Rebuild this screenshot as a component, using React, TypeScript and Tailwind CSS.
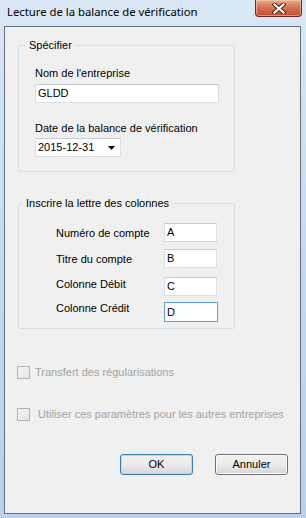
import React from "react";

const font = { fontFamily: '"Liberation Sans", Arial, sans-serif' };

function TextBox({ value, w, h = 19, focused = false }: { value: string; w: string; h?: number; focused?: boolean }) {
  return (
    <div
      className={`${w} ${h === 20 ? "h-[20px]" : "h-[19px]"} bg-white border flex items-center pl-[2px] text-[11px] leading-[13px] text-black ${
        focused ? "border-[#5b9fdf]" : "border-[#d9dee4] border-t-[#c6ccd4]"
      }`}
    >
      {value}
    </div>
  );
}

function CheckBox({ label, gap }: { label: string; gap: string }) {
  return (
    <div className="flex items-center ml-[12px]">
      <div className="w-[13px] h-[13px] border border-[#b4b4b4] bg-gradient-to-br from-[#f4f4f4] to-[#e6e6e6]" />
      <span className={`${gap} text-[11px] leading-[13px] text-[#a3a3a3]`}>{label}</span>
    </div>
  );
}

function Btn({ label, def = false }: { label: string; def?: boolean }) {
  return (
    <div
      className={`w-[73px] h-[21px] rounded-[3px] border flex items-center justify-center text-[11px] leading-[13px] text-black bg-gradient-to-b from-[#f2f2f2] via-[#ebebeb] to-[#d6d6d6] ${
        def ? "border-[#3c7fb1] shadow-[inset_0_0_0_1px_#a8dff8]" : "border-[#707070] shadow-[inset_0_0_0_1px_#fcfcfc]"
      }`}
    >
      {label}
    </div>
  );
}

export default function App() {
  return (
    <div className="w-[306px] h-[518px] flex flex-col bg-gradient-to-b from-[#dae7f6] via-[#c4d9f1] to-[#b9d1ee] overflow-hidden" style={font}>
      {/* Title bar */}
      <div className="h-[26px] flex items-start">
        <div
          className="mt-[4px] ml-[7px] text-[11.3px] leading-[16px] text-black"
          style={{ fontFamily: '"Noto Sans", "Open Sans", sans-serif' }}
        >
          Lecture de la balance de vérification
        </div>
        <div className="ml-auto mr-[4px] w-[47px] h-[17px] rounded-b-[4px] border border-t-0 border-[#6d2a1f] bg-gradient-to-b from-[#e8a98c] via-[#d27151] to-[#c24a2c] flex items-center justify-center shadow-[inset_0_0_0_1px_rgba(255,220,200,0.5)]">
          <svg width="14" height="11" viewBox="0 0 14 11">
            <path d="M2.5 1.5 L11.5 9.5 M11.5 1.5 L2.5 9.5" stroke="#4a2418" strokeWidth="4.2" strokeLinecap="square" />
            <path d="M2.5 1.5 L11.5 9.5 M11.5 1.5 L2.5 9.5" stroke="#ffffff" strokeWidth="2.2" strokeLinecap="square" />
          </svg>
        </div>
      </div>

      {/* Client area */}
      <div className="ml-[4px] mr-[5px] h-[488px] border border-[#66717e] bg-[#f0f0f0] flex flex-col text-[11px] leading-[13px] text-black">
        {/* Group 1 */}
        <fieldset className="ml-[13px] mt-[12px] w-[217px] border border-[#d5dfe5] rounded-[3px] pb-[14px]">
          <legend className="ml-[7px] px-[3px] leading-[13px]">Spécifier</legend>
          <div className="pl-[16px]">
            <div className="mt-[15px]">Nom de l'entreprise</div>
            <div className="mt-[4px]">
              <TextBox value="GLDD" w="w-[184px]" />
            </div>
            <div className="mt-[19px]">Date de la balance de vérification</div>
            <div className="mt-[3px] w-[86px] h-[19px] bg-white border border-[#d9dee4] border-t-[#c6ccd4] flex items-center pl-[2px]">
              <span>2015-12-31</span>
              <svg className="ml-auto mr-[5px]" width="7" height="4" viewBox="0 0 7 4">
                <path d="M0 0 H7 L3.5 4 Z" fill="#000" />
              </svg>
            </div>
          </div>
        </fieldset>

        {/* Group 2 */}
        <fieldset className="ml-[13px] mt-[25px] w-[217px] border border-[#d5dfe5] rounded-[3px] pb-[6px]">
          <legend className="ml-[4px] px-[3px] leading-[13px]">Inscrire la lettre des colonnes</legend>
          <div className="pl-[37px]">
            <div className="mt-[13px] flex items-start">
              <div className="w-[108px] mt-[4px]">Numéro de compte</div>
              <TextBox value="A" w="w-[53px]" />
            </div>
            <div className="mt-[7px] flex items-start">
              <div className="w-[108px] mt-[4px]">Titre du compte</div>
              <TextBox value="B" w="w-[53px]" />
            </div>
            <div className="mt-[9px] flex items-start">
              <div className="w-[108px] mt-[1px]">Colonne Débit</div>
              <TextBox value="C" w="w-[53px]" />
            </div>
            <div className="mt-[6px] flex items-start">
              <div className="w-[108px]">Colonne Crédit</div>
              <TextBox value="D" w="w-[54px]" h={20} focused />
            </div>
          </div>
        </fieldset>

        <div className="mt-[37px]">
          <CheckBox label="Transfert des régularisations" gap="ml-[5px]" />
        </div>
        <div className="mt-[29px]">
          <CheckBox label="Utiliser ces paramètres pour les autres entreprises" gap="ml-[8px]" />
        </div>

        <div className="mt-[33px] ml-[115px] flex gap-[22px]">
          <Btn label="OK" def />
          <Btn label="Annuler" />
        </div>
      </div>
    </div>
  );
}
